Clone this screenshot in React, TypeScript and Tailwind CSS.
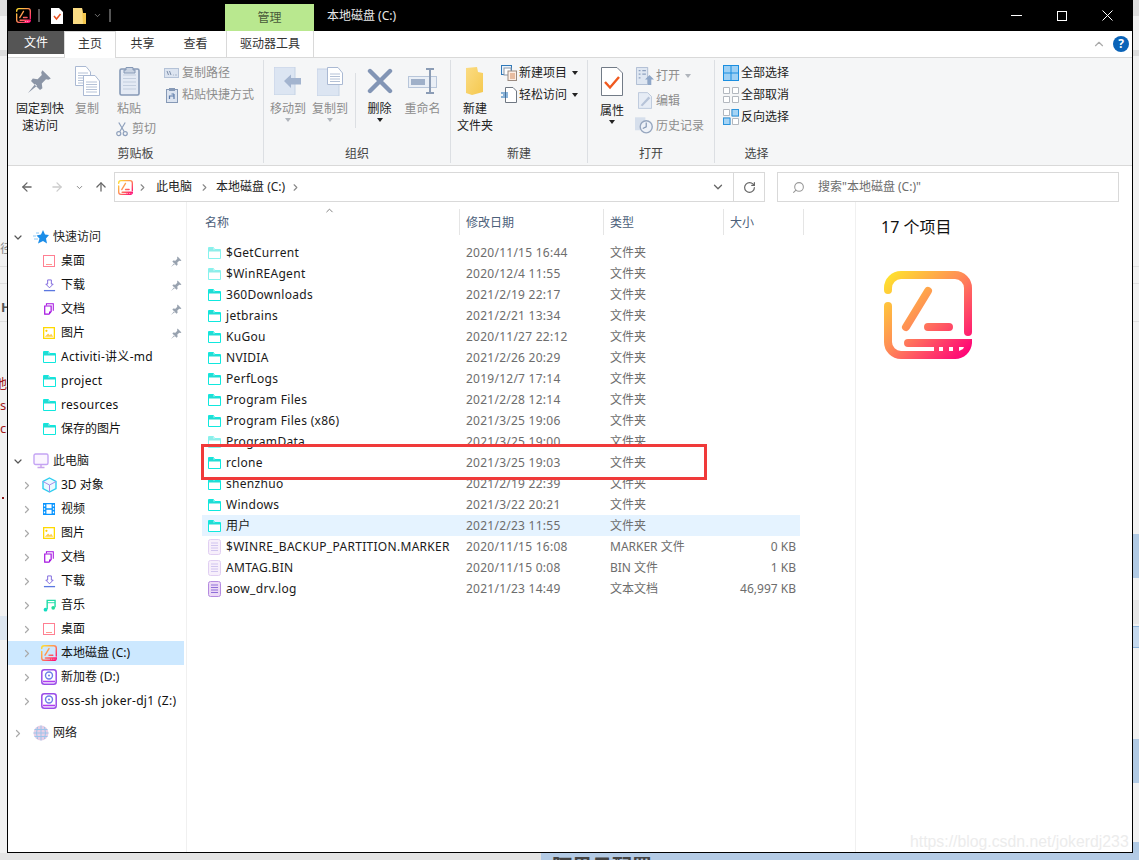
import type { ReactNode } from "react";
import { ChevronDown, ChevronRight, ChevronUp, RotateCw, Search, ArrowLeft, ArrowRight, ArrowUp } from "lucide-react";

const font = "[font-family:'Noto_Sans','Noto_Sans_CJK_SC',sans-serif]";

/* ---------- iconos pequeños ---------- */

function Logo({ size, id }: { size: number; id: string }) {
  return (
    <svg width={size} height={size} viewBox="0 0 88 88" fill="none" className="shrink-0">
      <defs>
        <linearGradient id={id} gradientUnits="userSpaceOnUse" x1="4" y1="4" x2="84" y2="84">
          <stop offset="0" stopColor="#ffe22e" />
          <stop offset="0.45" stopColor="#ff8f55" />
          <stop offset="1" stopColor="#ff0078" />
        </linearGradient>
      </defs>
      <g stroke={`url(#${id})`} strokeWidth="8" strokeLinecap="round">
        <path d="M4 19V17A13 13 0 0 1 17 4H71A13 13 0 0 1 84 17V61" />
        <path d="M4 35V71A13 13 0 0 0 17 84H71A13 13 0 0 0 84 72H24" />
        <path d="M44 20L22 56M44 56H65" />
      </g>
      <path d="M50 72H84V76A10 10 0 0 1 74 84H50Z" fill={`url(#${id})`} />
      <path d="M55 76H59V80H55ZM65 76H69V80H65ZM75 80V76H80L79 78Z" fill="#fff" />
    </svg>
  );
}

function CyanFolder({ faded }: { faded?: boolean }) {
  return (
    <svg width="13" height="12" viewBox="0 0 13 12" fill="none" className={`shrink-0 ${faded ? "opacity-50" : ""}`}>
      <path d="M.5 .5H5.5L6.5 2.5H12.5V11.5H.5Z" stroke="#0fe8de" fill="#fff" />
      <path d="M1 1H5L6 3H12V4.5H1Z" fill="#22dcd4" />
    </svg>
  );
}

function FileIcon({ faded }: { faded?: boolean }) {
  return (
    <svg width="15" height="16" viewBox="0 0 15 16" fill="none" className={`shrink-0 ${faded ? "opacity-40" : ""}`}>
      <rect x="1.5" y=".5" width="12" height="15" rx="2" fill="#ecd9f6" stroke="#b48ae0" />
      <path d="M4 4H11M4 6.5H11M4 9H11M4 11.5H11" stroke="#8f6fd8" />
    </svg>
  );
}

function NavIcon({ kind }: { kind: string }) {
  if (kind === "folder") return <CyanFolder />;
  if (kind === "drive-c") return <Logo size={16} id="logo-nav" />;
  const cls = "shrink-0";
  switch (kind) {
    case "star":
      return (
        <svg width="16" height="14" viewBox="0 0 16 14" className={cls}>
          <path d="M10 0L12 4.5L16 5L13 8.5L14 13.5L10 11L5 13.5L6.5 8.5L3.5 5.5L8 4.5Z" fill="#1b8de8" />
          <path d="M0 6H3M1 9H5M3 3H6" stroke="#8cc8f5" />
        </svg>
      );
    case "desktop":
      return (
        <svg width="12" height="12" viewBox="0 0 12 12" fill="none" className={cls}>
          <rect x=".5" y=".5" width="11" height="11" stroke="#ff7f92" />
          <path d="M3 9.5H9" stroke="#ff9a8e" />
        </svg>
      );
    case "download":
      return (
        <svg width="13" height="13" viewBox="0 0 14 14" fill="none" className={cls}>
          <path d="M5 1H9V5.5H11L7 9.5L3 5.5H5Z" stroke="#7a62dc" fill="#fff" />
          <path d="M1 12.5H13" stroke="#5b78e0" strokeWidth="1.4" />
        </svg>
      );
    case "docs":
      return (
        <svg width="12" height="12" viewBox="0 0 14 14" fill="none" className={cls}>
          <path d="M4 3V1H12V9" stroke="#a412e0" strokeWidth="1.2" />
          <path d="M2 3.5H9.5V10L7 13H2Z" stroke="#a412e0" strokeWidth="1.4" fill="#fff" />
          <path d="M7 13V10H9.5Z" fill="#a412e0" />
        </svg>
      );
    case "pics":
      return (
        <svg width="12" height="12" viewBox="0 0 14 14" fill="none" className={cls}>
          <rect x=".75" y=".75" width="12.5" height="12.5" stroke="#ffd900" strokeWidth="1.5" />
          <circle cx="4" cy="4.5" r="1.3" fill="#ffcc00" />
          <path d="M2 11.5L6 7.5L8 9.5L9.5 8L12 11.5Z" fill="#ffcf50" />
        </svg>
      );
    case "pc":
      return (
        <svg width="16" height="16" viewBox="0 0 16 16" fill="none" className={cls}>
          <rect x="1" y="1" width="14" height="10.5" rx="1.5" stroke="#c4a4f4" strokeWidth="1.4" fill="#fbf5ff" />
          <path d="M8 11.5V14.5M4.5 14.5H11.5" stroke="#c9a4ec" strokeWidth="1.4" />
        </svg>
      );
    case "3d":
      return (
        <svg width="15" height="16" viewBox="0 0 15 16" fill="none" className={cls}>
          <path d="M7.5 1L14 4.5V11.5L7.5 15L1 11.5V4.5Z" stroke="#2ccdf0" strokeWidth="1.4" fill="#eafaff" />
          <path d="M1 4.5L7.5 8L14 4.5M7.5 8V15" stroke="#a78ae8" />
        </svg>
      );
    case "video":
      return (
        <svg width="12" height="12" viewBox="0 0 14 14" className={cls}>
          <rect width="14" height="14" fill="#0a95ff" />
          <path d="M4 1.5H10V6H4ZM4 8H10V12.5H4ZM1 2H2.5V4H1ZM1 6H2.5V8H1ZM1 10H2.5V12H1ZM11.5 2H13V4H11.5ZM11.5 6H13V8H11.5ZM11.5 10H13V12H11.5Z" fill="#fff" />
        </svg>
      );
    case "music":
      return (
        <svg width="13" height="13" viewBox="0 0 14 14" fill="none" className={cls}>
          <path d="M4.5 11V1.5H13V9" stroke="#1fdca8" strokeWidth="1.5" />
          <path d="M4.5 4H13" stroke="#1fdca8" />
          <circle cx="2.7" cy="11.5" r="2" fill="#12dcc0" />
          <circle cx="11" cy="9.5" r="2" fill="#22dc9c" />
        </svg>
      );
    case "drive":
      return (
        <svg width="16" height="16" viewBox="0 0 16 16" fill="none" className={cls}>
          <rect x=".8" y=".8" width="14.4" height="14.4" rx="2.5" stroke="#9a4ce8" strokeWidth="1.5" />
          <circle cx="8" cy="6.5" r="3.5" stroke="#6f7fe8" strokeWidth="1.4" />
          <circle cx="8" cy="6.5" r="1" fill="#6f7fe8" />
          <path d="M2 12.5H14" stroke="#b03cf0" strokeWidth="1.6" />
        </svg>
      );
    default:
      return (
        <svg width="16" height="16" viewBox="0 0 16 16" fill="none" className={cls}>
          <circle cx="8" cy="8" r="7.5" fill="#e6cfe6" />
          <path d="M.5 8H15.5M1.5 4.5H14.5M1.5 11.5H14.5M8 .5V15.5M4.5 2Q2.5 8 4.5 14M11.5 2Q13.5 8 11.5 14" stroke="#9dc4ea" />
        </svg>
      );
  }
}

function PinSmall() {
  return (
    <svg width="11" height="11" viewBox="0 0 20 20" className="shrink-0" fill="#98a2af">
      <path d="M12 1L19 8L17 9L15 8.5L11.5 12L12 16L10 17.5L2.5 10L4 8L8 8.5L11.5 5L11 3ZM6 12.5L0 20L7.5 14Z" />
    </svg>
  );
}

/* ---------- iconos de la cinta ---------- */

function Page({ x, y, w, h }: { x: number; y: number; w: number; h: number }) {
  const lines = [];
  for (let i = y + 7; i < y + h - 2; i += 2.5) lines.push(`M${x + 3} ${i}H${x + w - 3}`);
  return (
    <g>
      <path d={`M${x + .5} ${y + .5}H${x + w - 5}L${x + w - .5} ${y + 6}V${y + h - .5}H${x + .5}Z`} fill="#fff" stroke="#aab9d3" />
      <path d={lines.join("")} stroke="#b4c1d6" />
    </g>
  );
}

const ribbonIcons: Record<string, ReactNode> = {
  pin: (
    <svg width="24" height="24" viewBox="0 0 20 20" fill="#8b95a6">
      <path d="M12 1L19 8L17 9L15 8.5L11.5 12L12 16L10 17.5L2.5 10L4 8L8 8.5L11.5 5L11 3ZM6 12.5L0 20L7.5 14Z" />
    </svg>
  ),
  copy: (
    <svg width="25" height="30" viewBox="0 0 25 30">
      <Page x={0} y={0} w={16} h={20} />
      <Page x={8} y={9} w={17} h={21} />
    </svg>
  ),
  paste: (
    <svg width="21" height="30" viewBox="0 0 21 30">
      <rect x="1" y="3" width="19" height="26" rx="1.5" fill="#e4eaf4" stroke="#8699b6" strokeWidth="1.6" />
      <path d="M4 9H17M4 12.5H17M4 16H17M4 19.5H17M4 23H17" stroke="#c3cede" />
      <path d="M7 4V1.5H14V4H16V7H5V4Z" fill="#c9d3e2" stroke="#8699b6" />
    </svg>
  ),
  move: (
    <svg width="28" height="28" viewBox="0 0 28 28">
      <path d="M0 0H21V28H0Z" fill="#dce5f2" stroke="#c5d2e5" />
      <path d="M10 14L17 7.5V11H27V17.5H17V21Z" fill="#a3b4cf" />
    </svg>
  ),
  copyto: (
    <svg width="27" height="29" viewBox="0 0 27 29">
      <path d="M0 2H22V29H0Z" fill="#dce5f2" stroke="#c5d2e5" />
      <Page x={10} y={0} w={16} h={18} />
    </svg>
  ),
  del: (
    <svg width="26" height="26" viewBox="0 0 26 26">
      <path d="M3 3L23 23M23 3L3 23" stroke="#8295b5" strokeWidth="4.4" strokeLinecap="round" />
    </svg>
  ),
  rename: (
    <svg width="29" height="26" viewBox="0 0 29 26" fill="none">
      <rect x=".5" y="8.5" width="28" height="11" fill="#eaeff6" stroke="#b8c6da" />
      <rect x="3" y="11" width="14" height="6" fill="#9fb0c9" />
      <path d="M18 1H26M18 25H26M22 1V25" stroke="#8b9cb5" strokeWidth="2" />
    </svg>
  ),
  newfolder: (
    <svg width="19" height="28" viewBox="0 0 19 28">
      <defs>
        <linearGradient id="nf" x1="0" x2="1" y1="0" y2="1">
          <stop offset="0" stopColor="#fbdc83" />
          <stop offset="1" stopColor="#f5c84e" />
        </linearGradient>
      </defs>
      <path d="M0 1L11 0L12 5L17 6V25L6 28L0 26Z" fill="url(#nf)" />
    </svg>
  ),
  props: (
    <svg width="22" height="29" viewBox="0 0 22 29" fill="none">
      <path d="M.5 .5H16L21.5 6V28.5H.5Z" fill="#fff" stroke="#727b87" />
      <path d="M4 15L9 20.5L18 10" stroke="#f0591f" strokeWidth="2.4" />
    </svg>
  ),
};

const smallIcons: Record<string, ReactNode> = {
  scissors: (
    <svg width="12" height="16" viewBox="0 0 13 16" fill="none" stroke="#8ea0bc" strokeWidth="1.3" className="shrink-0">
      <path d="M3 1L9 11M10 1L4 11" />
      <circle cx="3" cy="13" r="2.2" />
      <circle cx="10" cy="13" r="2.2" />
    </svg>
  ),
  path: (
    <svg width="15" height="10" viewBox="0 0 15 10" fill="none">
      <rect x=".5" y=".5" width="14" height="9" fill="#dce4f0" stroke="#b4c2d7" />
      <path d="M3 3L4.5 7M5.5 3L7 7M9 7H9.5M11 7H11.5M12.5 7H13" stroke="#7c8ea9" />
    </svg>
  ),
  shortcut: (
    <svg width="12" height="15" viewBox="0 0 12 15" fill="none">
      <rect x=".5" y="1.5" width="11" height="13" fill="#dce4f0" stroke="#8699b6" />
      <rect x="3" y="0" width="6" height="3" fill="#8699b6" />
      <path d="M3.5 11V8H8M8 11V6M5.5 6H8" stroke="#5d7ba8" strokeWidth="1.2" />
    </svg>
  ),
  newitem: (
    <svg width="16" height="16" viewBox="0 0 16 16" fill="none">
      <rect x=".5" y=".5" width="10" height="9" fill="#eaf2fb" stroke="#2f79b9" />
      <rect x="3" y="3" width="7" height="7" fill="#fff" stroke="#8a97a8" />
      <rect x="7" y="6" width="8.5" height="9.5" fill="#fdeee4" stroke="#9a8a80" />
      <path d="M9 9H14M9 11H14M9 13H14" stroke="#d28a5c" />
    </svg>
  ),
  easy: (
    <svg width="16" height="16" viewBox="0 0 16 16" fill="none">
      <path d="M4.5 .5H12L15.5 4V15.5H4.5Z" fill="#fff" stroke="#6f7782" />
      <path d="M0 6H7M2 8H7M0 10H7" stroke="#1c6db5" strokeWidth="1.2" />
    </svg>
  ),
  open: (
    <svg width="18" height="18" viewBox="0 0 20 20" fill="none">
      <path d="M.5 .5H13V19.5H.5Z" fill="#dfe7f2" stroke="#a9b8cf" />
      <path d="M3 4H5M3 8H5M3 12H5M7 4H11M7 8H11" stroke="#8fa2bf" strokeWidth="1.4" />
      <path d="M15 9L20 14H17V20H13V14H10Z" fill="#8fa7c8" />
    </svg>
  ),
  edit: (
    <svg width="14" height="17" viewBox="0 0 16 19" fill="none">
      <path d="M.5 .5H11L15.5 5V18.5H.5Z" fill="#e6ecf5" stroke="#b6c3d8" />
      <path d="M3 15L12 5L14 7L5 16Z" fill="#b6c3d8" />
    </svg>
  ),
  history: (
    <svg width="19" height="17" viewBox="0 0 22 19" fill="none">
      <rect x="0" y="0" width="12" height="15" fill="#d6dfec" />
      <circle cx="13" cy="11" r="7" fill="#eef2f8" stroke="#97a7bf" strokeWidth="1.6" />
      <path d="M13 6V11L9 13" stroke="#8598b5" strokeWidth="1.4" />
    </svg>
  ),
  all: (
    <svg width="16" height="16" viewBox="0 0 16 16">
      <rect width="16" height="16" fill="#1a8ee0" />
      <path d="M1 1H7.5V7.5H1ZM8.5 1H15V7.5H8.5ZM1 8.5H7.5V15H1ZM8.5 8.5H15V15H8.5Z" fill="#9ed0f4" />
    </svg>
  ),
  none: (
    <svg width="16" height="16" viewBox="0 0 16 16" fill="#fff" stroke="#b3b8bf">
      <path d="M.5 .5H6.5V6.5H.5ZM9.5 .5H15.5V6.5H9.5ZM.5 9.5H6.5V15.5H.5ZM9.5 9.5H15.5V15.5H9.5Z" />
    </svg>
  ),
  invert: (
    <svg width="16" height="16" viewBox="0 0 16 16">
      <path d="M.5 .5H6.5V6.5H.5ZM9 0H16V7H9ZM0 9H7V16H0ZM9.5 9.5H15.5V15.5H9.5Z" fill="#fff" stroke="#b3b8bf" />
      <path d="M8.5 0H16V7.5H8.5ZM0 8.5H7.5V16H0Z" fill="#2c94dc" />
      <path d="M9.5 1H15V6.5H9.5ZM1 9.5H6.5V15H1Z" fill="#a5d4f5" />
    </svg>
  ),
};

function Caret({ gray }: { gray?: boolean }) {
  return (
    <span
      className={`block h-0 w-0 border-x-[3.5px] border-t-[4px] border-x-transparent ${
        gray ? "border-t-[#b0b5bc]" : "border-t-[#222]"
      }`}
    />
  );
}

/* ---------- cinta ---------- */

function BigButton({
  icon,
  lines,
  width,
  off,
  caret,
  labelGap = "mt-[3px]",
}: {
  icon: string;
  lines: string[];
  width: string;
  off?: boolean;
  caret?: "black" | "gray";
  labelGap?: string;
}) {
  return (
    <div className={`flex shrink-0 flex-col items-center pt-[5px] ${width}`}>
      <div className="flex h-[32px] items-center justify-center">{ribbonIcons[icon]}</div>
      <div className={`${labelGap} text-center text-[12px] leading-[17px] whitespace-nowrap ${off ? "text-[#8d8d8d]" : "text-[#222]"}`}>
        {lines.map((l) => (
          <div key={l}>{l}</div>
        ))}
      </div>
      {caret && (
        <div className="mt-[1px]">
          <Caret gray={caret === "gray"} />
        </div>
      )}
    </div>
  );
}

function SmallButton({
  icon,
  label,
  off,
  caret,
}: {
  icon: string;
  label: string;
  off?: boolean;
  caret?: "black" | "gray";
}) {
  return (
    <div className="flex h-[22px] items-center">
      <span className="flex w-[17px] shrink-0 items-center justify-center">{smallIcons[icon]}</span>
      <span className={`ml-[2px] text-[12px] whitespace-nowrap ${off ? "text-[#8d8d8d]" : "text-[#222]"}`}>{label}</span>
      {caret && (
        <span className="ml-[5px]">
          <Caret gray={caret === "gray"} />
        </span>
      )}
    </div>
  );
}

function Group({ title, width, children }: { title: string; width: string; children: ReactNode }) {
  return (
    <div className={`my-[2px] flex shrink-0 flex-col border-r border-[#dcdfe3] ${width}`}>
      <div className="flex min-h-0 flex-1">{children}</div>
      <div className="h-[20px] text-center text-[12px] leading-[22px] text-[#444]">{title}</div>
    </div>
  );
}

function Ribbon() {
  return (
    <div className="flex h-[109px] shrink-0 border-y border-[#d9d9d9] bg-[#f5f6f7]">
      <Group title="剪贴板" width="w-[256px]">
        <div className="ml-[7px] flex">
          <BigButton icon="pin" lines={["固定到快", "速访问"]} width="w-[50px]" />
          <BigButton icon="copy" lines={["复制"]} width="w-[44px]" off />
          <div className="flex w-[40px] flex-col">
            <BigButton icon="paste" lines={["粘贴"]} width="w-[40px]" off />
            <div className="mt-[3px] flex items-center pl-[7px]">
              {smallIcons.scissors}
              <span className="ml-[4px] text-[12px] whitespace-nowrap text-[#8d8d8d]">剪切</span>
            </div>
          </div>
        </div>
        <div className="ml-[14px] flex flex-col pt-[2px]">
          <SmallButton icon="path" label="复制路径" off />
          <SmallButton icon="shortcut" label="粘贴快捷方式" off />
        </div>
      </Group>
      <Group title="组织" width="w-[187px]">
        <div className="ml-[6px] flex">
          <BigButton icon="move" lines={["移动到"]} width="w-[36px]" off caret="gray" />
          <BigButton icon="copyto" lines={["复制到"]} width="w-[48px]" off caret="gray" />
          <div className="mx-[1px] mt-[13px] h-[55px] w-px bg-[#dcdfe3]" />
          <BigButton icon="del" lines={["删除"]} width="w-[45px]" caret="black" />
          <BigButton icon="rename" lines={["重命名"]} width="w-[41px]" off />
        </div>
      </Group>
      <Group title="新建" width="w-[137px]">
        <div className="ml-[4px] flex">
          <BigButton icon="newfolder" lines={["新建", "文件夹"]} width="w-[40px]" />
          <div className="ml-[5px] flex flex-col pt-[2px]">
            <SmallButton icon="newitem" label="新建项目" caret="black" />
            <SmallButton icon="easy" label="轻松访问" caret="black" />
          </div>
        </div>
      </Group>
      <Group title="打开" width="w-[127px]">
        <div className="ml-[4px] flex">
          <BigButton icon="props" lines={["属性"]} width="w-[40px]" caret="black" labelGap="mt-[5px]" />
          <div className="ml-[2px] flex flex-col pt-[3px]">
            <div className="flex h-[25px] items-center">
              <span className="flex w-[21px] justify-center">{smallIcons.open}</span>
              <span className="ml-[1px] text-[12px] text-[#8d8d8d]">打开</span>
              <span className="ml-[5px]"><Caret gray /></span>
            </div>
            <div className="flex h-[25px] items-center">
              <span className="flex w-[21px] justify-center">{smallIcons.edit}</span>
              <span className="ml-[1px] text-[12px] text-[#8d8d8d]">编辑</span>
            </div>
            <div className="flex h-[25px] items-center">
              <span className="flex w-[21px] justify-center">{smallIcons.history}</span>
              <span className="ml-[1px] text-[12px] whitespace-nowrap text-[#8d8d8d]">历史记录</span>
            </div>
          </div>
        </div>
      </Group>
      <div className="my-[2px] flex w-[85px] flex-col">
        <div className="ml-[7px] flex flex-1 flex-col pt-[2px]">
          <SmallButton icon="all" label="全部选择" />
          <SmallButton icon="none" label="全部取消" />
          <SmallButton icon="invert" label="反向选择" />
        </div>
        <div className="h-[20px] pr-[2px] text-center text-[12px] leading-[22px] text-[#444]">选择</div>
      </div>
    </div>
  );
}

/* ---------- navegación ---------- */

type NavRow = { label: string; icon: string; pin?: boolean; selected?: boolean };

const quickRows: NavRow[] = [
  { label: "桌面", icon: "desktop", pin: true },
  { label: "下载", icon: "download", pin: true },
  { label: "文档", icon: "docs", pin: true },
  { label: "图片", icon: "pics", pin: true },
  { label: "Activiti-讲义-md", icon: "folder" },
  { label: "project", icon: "folder" },
  { label: "resources", icon: "folder" },
  { label: "保存的图片", icon: "folder" },
];

const pcRows: NavRow[] = [
  { label: "3D 对象", icon: "3d" },
  { label: "视频", icon: "video" },
  { label: "图片", icon: "pics" },
  { label: "文档", icon: "docs" },
  { label: "下载", icon: "download" },
  { label: "音乐", icon: "music" },
  { label: "桌面", icon: "desktop" },
  { label: "本地磁盘 (C:)", icon: "drive-c", selected: true },
  { label: "新加卷 (D:)", icon: "drive" },
  { label: "oss-sh joker-dj1 (Z:)", icon: "drive" },
];

function TopRow({ label, icon, open }: { label: string; icon: string; open?: boolean }) {
  return (
    <div className="flex h-[24px] items-center pl-[4px]">
      <span className="flex w-[12px] justify-center">
        {open ? (
          <ChevronDown size={13} strokeWidth={2.4} className="text-[#555]" />
        ) : (
          <ChevronRight size={13} strokeWidth={2.4} className="text-[#aaa]" />
        )}
      </span>
      <span className="ml-[9px] flex w-[16px] justify-center">
        <NavIcon kind={icon} />
      </span>
      <span className="ml-[4px] text-[12px] text-[#222]">{label}</span>
    </div>
  );
}

function SubRow({ row, expandable }: { row: NavRow; expandable?: boolean }) {
  const latin = /[a-z]/.test(row.label);
  return (
    <div className={`flex h-[24px] w-[176px] items-center pl-[13px] ${row.selected ? "bg-[#cce8ff]" : ""}`}>
      <span className="flex w-[12px] justify-center">
        {expandable && <ChevronRight size={13} strokeWidth={2.4} className="text-[#aaa]" />}
      </span>
      <span className="ml-[8px] flex w-[16px] justify-center">
        <NavIcon kind={row.icon} />
      </span>
      <span className={`ml-[4px] text-[12px] whitespace-nowrap text-[#111] ${latin ? "tracking-[0.3px]" : ""}`}>{row.label}</span>
      {row.pin && (
        <span className="ml-auto mr-[2px]">
          <PinSmall />
        </span>
      )}
    </div>
  );
}

function NavPane() {
  return (
    <div className="w-[179px] shrink-0 border-r border-[#f0f0f0] pt-[23px]">
      <TopRow label="快速访问" icon="star" open />
      {quickRows.map((r) => (
        <SubRow key={r.label + r.icon} row={r} />
      ))}
      <div className="h-[8px]" />
      <TopRow label="此电脑" icon="pc" open />
      {pcRows.map((r) => (
        <SubRow key={r.label} row={r} expandable />
      ))}
      <div className="h-[8px]" />
      <TopRow label="网络" icon="net" />
    </div>
  );
}

/* ---------- lista de archivos ---------- */

type FileRow = { name: string; date: string; type: string; size?: string; kind: "dir" | "file"; faded?: boolean; hover?: boolean };

const files: FileRow[] = [
  { name: "$GetCurrent", date: "2020/11/15 16:44", type: "文件夹", kind: "dir", faded: true },
  { name: "$WinREAgent", date: "2020/12/4 11:55", type: "文件夹", kind: "dir", faded: true },
  { name: "360Downloads", date: "2021/2/19 22:17", type: "文件夹", kind: "dir" },
  { name: "jetbrains", date: "2021/2/21 13:34", type: "文件夹", kind: "dir" },
  { name: "KuGou", date: "2020/11/27 22:12", type: "文件夹", kind: "dir" },
  { name: "NVIDIA", date: "2021/2/26 20:29", type: "文件夹", kind: "dir" },
  { name: "PerfLogs", date: "2019/12/7 17:14", type: "文件夹", kind: "dir" },
  { name: "Program Files", date: "2021/2/28 12:14", type: "文件夹", kind: "dir" },
  { name: "Program Files (x86)", date: "2021/3/25 19:06", type: "文件夹", kind: "dir" },
  { name: "ProgramData", date: "2021/3/25 19:00", type: "文件夹", kind: "dir", faded: true },
  { name: "rclone", date: "2021/3/25 19:03", type: "文件夹", kind: "dir" },
  { name: "shenzhuo", date: "2021/2/19 22:39", type: "文件夹", kind: "dir" },
  { name: "Windows", date: "2021/3/22 20:21", type: "文件夹", kind: "dir" },
  { name: "用户", date: "2021/2/23 11:55", type: "文件夹", kind: "dir", hover: true },
  { name: "$WINRE_BACKUP_PARTITION.MARKER", date: "2020/11/15 16:08", type: "MARKER 文件", size: "0 KB", kind: "file", faded: true },
  { name: "AMTAG.BIN", date: "2020/11/15 0:08", type: "BIN 文件", size: "1 KB", kind: "file", faded: true },
  { name: "aow_drv.log", date: "2021/1/23 14:49", type: "文本文档", size: "46,997 KB", kind: "file" },
];

function FileList() {
  return (
    <div className="relative w-[668px] shrink-0">
      <div className="mt-[7px] grid h-[26px] grid-cols-[273px_144px_120px_80px] text-[12px] text-[#4c607a]">
        <div className="relative flex items-center border-r border-[#e5e5e5] pl-[18px] pt-[2px]">
          名称
          <ChevronUp size={11} className="absolute left-[137px] top-[-4px] text-[#777]" />
        </div>
        <div className="flex items-center border-r border-[#e5e5e5] pl-[6px] pt-[2px]">修改日期</div>
        <div className="flex items-center border-r border-[#e5e5e5] pl-[6px] pt-[2px]">类型</div>
        <div className="flex items-center border-r border-[#e5e5e5] pl-[6px] pt-[2px]">大小</div>
      </div>
      <div className="mt-[7px] ml-[15px] w-[598px]">
        {files.map((f) => (
          <div
            key={f.name}
            className={`grid h-[21px] grid-cols-[258px_144px_120px_76px] items-center text-[12px] ${f.hover ? "bg-[#e5f3ff]" : ""}`}
          >
            <div className="flex items-center whitespace-nowrap text-[#1a1a1a]">
              {f.kind === "dir" ? (
                <span className="ml-[6px] flex w-[18px]"><CyanFolder faded={f.faded} /></span>
              ) : (
                <span className="ml-[5px] flex w-[19px]"><FileIcon faded={f.faded} /></span>
              )}
              <span className="tracking-[0.3px]">{f.name}</span>
            </div>
            <div className="pl-[6px] tracking-[0.25px] text-[#6d6d6d]">{f.date}</div>
            <div className="pl-[6px] text-[#6d6d6d]">{f.type}</div>
            <div className="pr-[4px] text-right text-[#6d6d6d]">{f.size}</div>
          </div>
        ))}
      </div>
    </div>
  );
}

/* ---------- ventana ---------- */

function TitleBar() {
  return (
    <div className="flex h-[31px] shrink-0 items-center bg-black">
      <span className="ml-[8px]"><Logo size={15} id="logo-title" /></span>
      <span className="ml-[7px] h-[13px] w-[2px] bg-[#555]" />
      <svg width="12" height="16" viewBox="0 0 12 16" className="ml-[11px]" fill="none">
        <path d="M0 0H8L12 4V16H0Z" fill="#fff" />
        <path d="M3 8L5.5 11L9.5 6" stroke="#e8501f" strokeWidth="1.5" />
      </svg>
      <svg width="13" height="16" viewBox="0 0 13 16" className="ml-[10px]">
        <path d="M0 0H9L10 5H13V16H0Z" fill="#fbdc83" />
        <path d="M9 0L10 5H13V16H10Z" fill="#f4c74e" />
      </svg>
      <ChevronDown size={9} className="ml-[7px] text-[#9a9a9a]" />
      <span className="ml-[7px] h-[13px] w-[2px] bg-[#555]" />
      <div className="ml-[114px] flex h-[27px] w-[89px] items-center justify-center self-end bg-[#b9e88f] text-[12px] text-[#4a5a3a]">管理</div>
      <span className="ml-[13px] text-[12px] text-[#e8e8e8]">本地磁盘 (C:)</span>
      <div className="ml-auto flex items-center text-white">
        <span className="h-px w-[11px] bg-white" />
        <span className="ml-[35px] h-[10px] w-[10px] border border-white" />
        <svg width="11" height="11" viewBox="0 0 11 11" className="ml-[35px] mr-[19px]" stroke="#fff">
          <path d="M.5 .5L10.5 10.5M10.5 .5L.5 10.5" />
        </svg>
      </div>
    </div>
  );
}

function TabRow() {
  return (
    <div className="flex h-[26px] shrink-0 bg-white text-[12px] text-[#333]">
      <div className="flex h-[23px] w-[56px] items-center justify-center bg-[#555] pt-[1px] text-white">文件</div>
      <div className="z-10 -mb-px flex h-[27px] w-[52px] items-center justify-center border-x border-t border-[#d9d9d9] bg-white pb-[2px]">主页</div>
      <div className="flex h-[26px] w-[53px] items-center justify-center pb-[1px]">共享</div>
      <div className="mr-[4px] flex h-[26px] w-[53px] items-center justify-center pb-[1px]">查看</div>
      <div className="flex h-[26px] w-[88px] items-center justify-center border-x border-[#d9d9d9] pb-[1px]">驱动器工具</div>
      <div className="ml-auto mr-[3px] flex items-center">
        <ChevronUp size={14} className="mr-[7px] text-[#aaa]" />
        <span className="flex h-[16px] w-[16px] items-center justify-center rounded-full bg-[#0a63b8] text-[12px] leading-none font-bold text-white">?</span>
      </div>
    </div>
  );
}

function AddressBar() {
  return (
    <div className="flex h-[36px] shrink-0 items-start bg-white pt-[6px]">
      <div className="flex h-[30px] w-[106px] items-center">
        <ArrowLeft size={14} strokeWidth={2.2} className="ml-[12px] text-[#666]" />
        <ArrowRight size={14} strokeWidth={2.2} className="ml-[16px] text-[#ccc]" />
        <ChevronDown size={9} strokeWidth={2.6} className="ml-[11px] text-[#888]" />
        <ArrowUp size={14} strokeWidth={2.2} className="ml-[10px] text-[#666]" />
      </div>
      <div className="flex h-[30px] w-[651px] items-center border border-[#d9d9d9] text-[12px] text-[#222]">
        <span className="ml-[3px]"><Logo size={15} id="logo-addr" /></span>
        <ChevronRight size={11} strokeWidth={2.4} className="ml-[4px] text-[#888]" />
        <span className="ml-[8px]">此电脑</span>
        <ChevronRight size={11} strokeWidth={2.4} className="ml-[7px] text-[#888]" />
        <span className="ml-[6px] whitespace-nowrap">本地磁盘 (C:)</span>
        <ChevronRight size={11} strokeWidth={2.4} className="ml-[5px] text-[#888]" />
        <ChevronDown size={14} strokeWidth={2.2} className="ml-auto mr-[8px] text-[#666]" />
        <span className="flex h-full w-[31px] items-center justify-center border-l border-[#d9d9d9]">
          <RotateCw size={13} strokeWidth={2.2} className="text-[#666]" />
        </span>
      </div>
      <div className="ml-[12px] flex h-[30px] w-[342px] items-center border border-[#d9d9d9] text-[12px] text-[#6d6d6d]">
        <Search size={13} className="ml-[14px] -scale-x-100 text-[#999]" />
        <span className="ml-[13px] whitespace-nowrap">搜索"本地磁盘 (C:)"</span>
      </div>
    </div>
  );
}

function Backdrop() {
  return (
    <>
      {/* Página del navegador detrás de la ventana, visible solo en los bordes */}
      <div className="absolute left-0 top-0 h-[860px] w-[7px] overflow-hidden bg-[#f1f1f1]">
        <div className="h-[16px] bg-[#dedede]" />
        <div className="mt-[34px] h-[6px] bg-[#dcdcdc]" />
        <div className="mt-[210px] h-px bg-[#dedede]" />
        <div className="mt-[16px] h-px bg-[#dedede]" />
        <div className="mt-[37px] h-px bg-[#dedede]" />
        <div className="absolute left-0 top-[240px] text-[12px] text-[#888]">径</div>
        <div className="absolute left-[1px] top-[298px] text-[13px] font-bold text-[#555]">H</div>
        <div className="absolute left-[-6px] top-[374px] text-[13px] text-[#a01818]">地</div>
        <div className="absolute left-0 top-[396px] text-[13px] text-[#a01818]">s</div>
        <div className="absolute left-0 top-[419px] text-[13px] text-[#a01818]">c</div>
        <div className="absolute left-[2px] top-[497px] h-[2px] w-[2px] bg-[#8a1a1a]" />
        <div className="absolute left-0 top-[616px] h-[24px] w-full bg-[#dde6f0]" />
      </div>
      <div className="absolute right-0 top-0 h-[860px] w-[6px] overflow-hidden bg-[#f1f1f1]">
        <div className="h-[16px] bg-[#dedede]" />
        <div className="mt-[34px] h-[6px] bg-[#dcdcdc]" />
        <div className="mt-[210px] h-px bg-[#dedede]" />
        <div className="mt-[16px] h-px bg-[#dedede]" />
        <div className="mt-[37px] h-px bg-[#dedede]" />
        <div className="absolute top-[534px] h-[44px] w-full bg-[#b1cae4]" />
        <div className="absolute top-[600px] h-[24px] w-full bg-[#e6e6e6]" />
        <div className="absolute top-[626px] h-[22px] w-full border-y border-[#8cb3da] bg-[#c5d9ee]" />
        <div className="absolute top-[739px] h-[44px] w-full bg-[#b1cae4]" />
        <div className="absolute top-[842px] h-[18px] w-full bg-[#b1cae4]" />
      </div>
      <div className="absolute bottom-0 left-0 h-[7px] w-full overflow-hidden bg-[#e4e4e4]">
        <div className="absolute bottom-0 left-[541px] right-0 top-0 overflow-hidden bg-[#b4cbe5]">
          <div className="mt-[1px] ml-[11px] text-[20px] leading-[26px] font-bold text-[#444]">阿里云配置</div>
        </div>
      </div>
    </>
  );
}

export default function App() {
  return (
    <div className={`relative h-[860px] w-[1139px] overflow-hidden bg-[#f1f1f1] ${font}`}>
      <Backdrop />
      <div className="absolute left-[7px] top-0 flex h-[853px] w-[1126px] flex-col border-x border-b border-black bg-white">
        <TitleBar />
        <TabRow />
        <Ribbon />
        <AddressBar />
        <div className="flex min-h-0 flex-1">
          <NavPane />
          <FileList />
          <div className="flex-1 border-l border-[#f0f0f0] pl-[25px] pt-[13px]">
            <div className="text-[16px] text-[#111]">17 个项目</div>
            <div className="ml-[3px] mt-[32px]">
              <Logo size={88} id="logo-big" />
            </div>
          </div>
        </div>
      </div>
      {/* Recuadro rojo de la anotación */}
      <div className="absolute left-[201px] top-[444px] h-[36px] w-[506px] border-[3px] border-[#f03a3a]" />
      {/* Marca de agua */}
      <div className="absolute left-[910px] top-[830px] whitespace-nowrap text-[15.8px] text-[#ececec] [font-family:'Liberation_Sans',sans-serif]">
        https://blog.csdn.net/jokerdj233
      </div>
    </div>
  );
}
